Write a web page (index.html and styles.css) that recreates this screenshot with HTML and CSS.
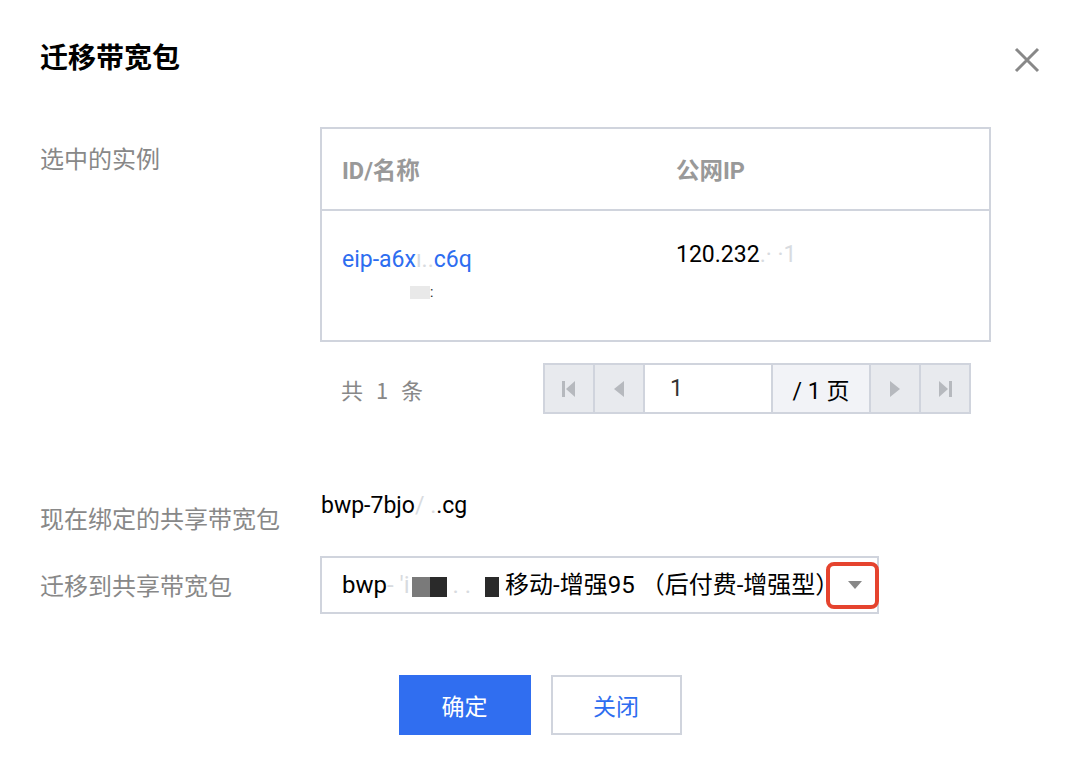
FILE: index.html
```html
<!DOCTYPE html>
<html lang="zh-CN">
<head>
  <meta charset="UTF-8" />
  <meta name="viewport" content="width=device-width, initial-scale=1.0"/>
  <title>迁移带宽包</title>
  <link rel="stylesheet" href="styles.css">
</head>
<body>

<div class="dialog">
  <div class="dialog-head">
    <h2>迁移带宽包</h2>
    <svg class="close" width="26" height="26" viewBox="0 0 26 26">
      <path d="M2 2 L24 24 M24 2 L2 24" stroke="#888" stroke-width="3" fill="none"/>
    </svg>
  </div>

  <div class="row row-instances">
    <div class="label label-top">选中的实例</div>
    <div class="content">
      <div class="table">
        <div class="thead">
          <div class="cell col-id">ID/名称</div>
          <div class="cell col-ip">公网IP</div>
        </div>
        <div class="tbody">
          <div class="cell col-id">
            <div class="link">eip-a6x<span class="fade">ı..</span>c6q</div>
            <div class="sub"><span class="mask-light"></span><span class="dot">:</span></div>
          </div>
          <div class="cell col-ip ip">120.232<span class="fade">.· ·1</span></div>
        </div>
      </div>

      <div class="pager-row">
        <div class="count">共 1 条</div>
        <div class="pager">
          <div class="pg-btn">
            <svg width="14" height="16" viewBox="0 0 14 16"><rect x="0" y="0" width="3" height="16" fill="#b6b9be"/><path d="M13 0 L4 8 L13 16 Z" fill="#b6b9be"/></svg>
          </div>
          <div class="pg-btn">
            <svg width="12" height="16" viewBox="0 0 12 16"><path d="M11 0 L1 8 L11 16 Z" fill="#b6b9be"/></svg>
          </div>
          <div class="pg-input">1</div>
          <div class="pg-total">/ 1 页</div>
          <div class="pg-btn">
            <svg width="12" height="16" viewBox="0 0 12 16"><path d="M1 0 L11 8 L1 16 Z" fill="#b6b9be"/></svg>
          </div>
          <div class="pg-btn">
            <svg width="14" height="16" viewBox="0 0 14 16"><path d="M1 0 L10 8 L1 16 Z" fill="#b6b9be"/><rect x="11" y="0" width="3" height="16" fill="#b6b9be"/></svg>
          </div>
        </div>
      </div>
    </div>
  </div>

  <div class="row row-current">
    <div class="label label-low">现在绑定的共享带宽包</div>
    <div class="value">bwp-7bjo<span class="fade">/ .</span>.cg</div>
  </div>

  <div class="row row-target">
    <div class="label">迁移到共享带宽包</div>
    <div class="select">
      <div class="select-text">bwp<span class="fade">-</span> <span class="fade">'i</span><span class="mask-gray"></span><span class="mask-dark"></span><span class="fade"> . . </span><span class="mask-dark mask-sq"></span> 移动-增强95 （后付费-增强型）</div>
      <span class="arrow"></span>
      <span class="highlight"></span>
    </div>
  </div>

  <div class="actions">
    <button class="btn btn-primary">确定</button>
    <button class="btn btn-default">关闭</button>
  </div>
</div>

</body>
</html>
```

FILE: styles.css
```css
body {
  margin: 0;
  background: #fff;
  font-family: Roboto, "Noto Sans CJK SC", sans-serif;
  color: #000;
}
.dialog {
  padding: 36px 38px 0 40px;
}
.dialog-head {
  display: flex;
  justify-content: space-between;
  align-items: center;
  height: 40px;
}
.dialog-head h2 {
  margin: 0;
  font-size: 28px;
  line-height: 40px;
  font-weight: bold;
  font-family: "Noto Sans CJK SC", sans-serif;
}
.close {
  margin-top: 8px;
}
.row {
  display: flex;
}
.label {
  width: 280px;
  flex-shrink: 0;
  font-size: 24px;
  line-height: 32px;
  color: #888;
  font-family: "Noto Sans CJK SC", sans-serif;
}
.row-instances {
  margin-top: 51px;
}
.label-top {
  padding-top: 15px;
}
.content {
  width: 671px;
}
.table {
  border: 2px solid #d0d4dd;
}
.thead,
.tbody {
  display: flex;
}
.thead {
  height: 80px;
  align-items: center;
  border-bottom: 2px solid #d0d4dd;
  font-size: 23.5px;
  font-weight: bold;
  color: #999;
}
.tbody {
  height: 129px;
  font-size: 23px;
  line-height: 32px;
}
.cell {
  padding-left: 20px;
  box-sizing: border-box;
}
.col-id {
  width: 334px;
}
.col-ip {
  flex: 1;
}
.tbody .col-id {
  padding-top: 33px;
}
.tbody .ip {
  padding-top: 28px;
}
.link {
  color: #2d6df0;
}
.fade {
  color: #d8dbe0;
}
.sub {
  height: 32px;
  display: flex;
  align-items: center;
}
.mask-light {
  display: inline-block;
  width: 20px;
  height: 13px;
  margin-left: 68px;
  background: #e9e9e9;
}
.dot {
  font-size: 14px;
  color: #222;
}
.pager-row {
  display: flex;
  align-items: center;
  margin-top: 21px;
  height: 51px;
}
.count {
  padding-left: 21px;
  font-size: 22px;
  color: #888;
  word-spacing: 8px;
  font-family: "Noto Sans CJK SC", sans-serif;
}
.pager {
  display: flex;
  margin-left: auto;
  margin-right: 20px;
  height: 51px;
}
.pager > div {
  border: 2px solid #d0d4dd;
  box-sizing: border-box;
  display: flex;
  align-items: center;
  font-size: 23px;
}
.pager > div + div {
  margin-left: -2px;
}
.pg-btn {
  width: 52px;
  justify-content: center;
  background: #e8eaee;
}
.pg-input {
  width: 130px;
  padding-left: 25px;
  background: #fff;
  color: #333;
}
.pg-total {
  width: 100px;
  justify-content: center;
  background: #f2f3f7;
}
.row-current {
  margin-top: 76px;
  height: 44px;
}
.label-low {
  padding-top: 12px;
}
.value {
  font-size: 23px;
  line-height: 32px;
  padding-left: 1px;
}
.row-target {
  margin-top: 22px;
  align-items: center;
}
.select {
  position: relative;
  width: 559px;
  height: 58px;
  border: 2px solid #d0d4dd;
  box-sizing: border-box;
  display: flex;
  align-items: center;
}
.select-text {
  width: 494px;
  margin-left: 20px;
  overflow: hidden;
  white-space: nowrap;
  font-size: 24px;
  line-height: 32px;
}
.mask-gray,
.mask-dark {
  display: inline-block;
  vertical-align: middle;
  height: 20px;
}
.mask-gray {
  width: 18px;
  margin-left: 2px;
  background: #7a7a7a;
}
.mask-dark {
  width: 17px;
  background: #2a2a2a;
}
.mask-sq {
  width: 14px;
  margin-left: 8px;
}
.arrow {
  margin-left: 12px;
  width: 0;
  height: 0;
  border-left: 7px solid transparent;
  border-right: 7px solid transparent;
  border-top: 8px solid #888;
}
.highlight {
  position: absolute;
  left: 504px;
  top: 4px;
  width: 53px;
  height: 47px;
  box-sizing: border-box;
  border: 4px solid #e5432e;
  border-radius: 8px;
}
.actions {
  display: flex;
  justify-content: center;
  gap: 20px;
  margin-top: 61px;
}
.btn {
  width: 132px;
  height: 60px;
  font-size: 23px;
  font-family: "Noto Sans CJK SC", sans-serif;
  border: none;
  cursor: pointer;
}
.btn-primary {
  background: #306ef0;
  color: #fff;
}
.btn-default {
  width: 131px;
  background: #fff;
  color: #2d6df0;
  border: 2px solid #d0d4dd;
}
```
